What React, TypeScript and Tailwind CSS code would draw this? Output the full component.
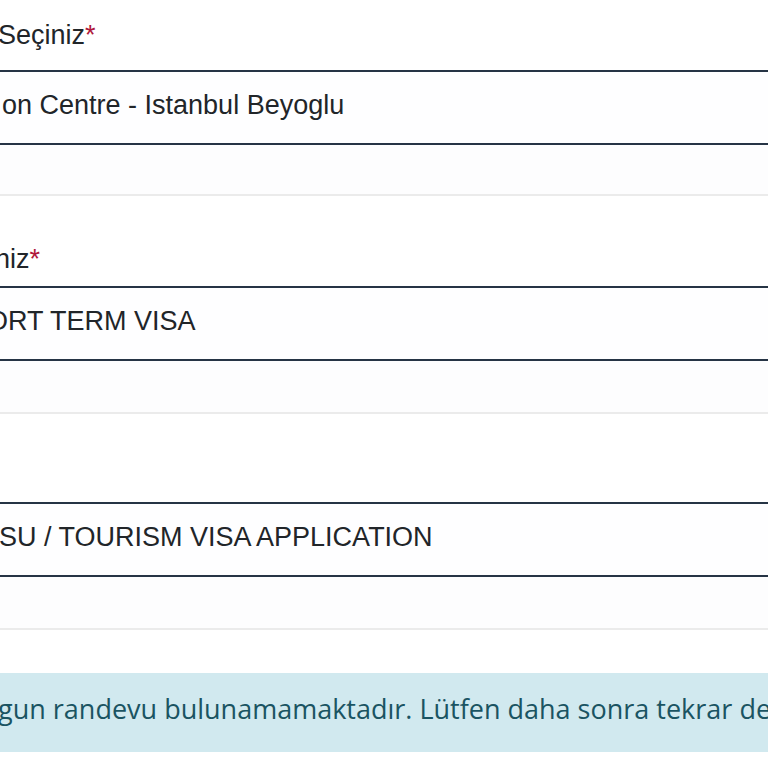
import React from "react";

export default function App() {
  return (
    <div className="w-[768px] h-[768px] overflow-hidden bg-white font-['Liberation_Sans',Arial,sans-serif] text-[27px] leading-[32px] text-[#212529]">
      {/* Group 1 */}
      <div className="h-[70px] pt-[19px] whitespace-nowrap -indent-[2px]">
        Seçiniz<span className="text-[#b0173b]">*</span>
      </div>
      <div className="h-[75px] border-y-2 border-[#263445] bg-[#fefeff] pt-[17px] whitespace-nowrap indent-[2px]">
        on Centre - Istanbul Beyoglu
      </div>
      <div className="h-[49px] bg-[#fdfdfe]" />
      <div className="h-[2px] bg-[#ebebeb]" />

      {/* Group 2 */}
      <div className="h-[90px] pt-[47px] whitespace-nowrap -indent-[5px]">
        niz<span className="text-[#b0173b]">*</span>
      </div>
      <div className="h-[75px] border-y-2 border-[#263445] bg-[#fefeff] pt-[17px] whitespace-nowrap -indent-[13px]">
        ORT TERM VISA
      </div>
      <div className="h-[51px] bg-[#fdfdfe]" />
      <div className="h-[2px] bg-[#ebebeb]" />

      {/* Group 3 */}
      <div className="h-[88px]" />
      <div className="h-[75px] border-y-2 border-[#263445] bg-[#fefeff] pt-[17px] whitespace-nowrap -indent-[1px]">
        SU / TOURISM VISA APPLICATION
      </div>
      <div className="h-[51px] bg-[#fdfdfe]" />
      <div className="h-[2px] bg-[#ebebeb]" />

      {/* Alert */}
      <div className="mt-[43px] h-[79px] bg-[#d1e9ef] pt-[20px] font-['Open_Sans',sans-serif] text-[27px] leading-[32px] text-[#1a5462] whitespace-nowrap -indent-[2px]">
        gun randevu bulunamamaktadır. Lütfen daha sonra tekrar deneyiniz.
      </div>
    </div>
  );
}
